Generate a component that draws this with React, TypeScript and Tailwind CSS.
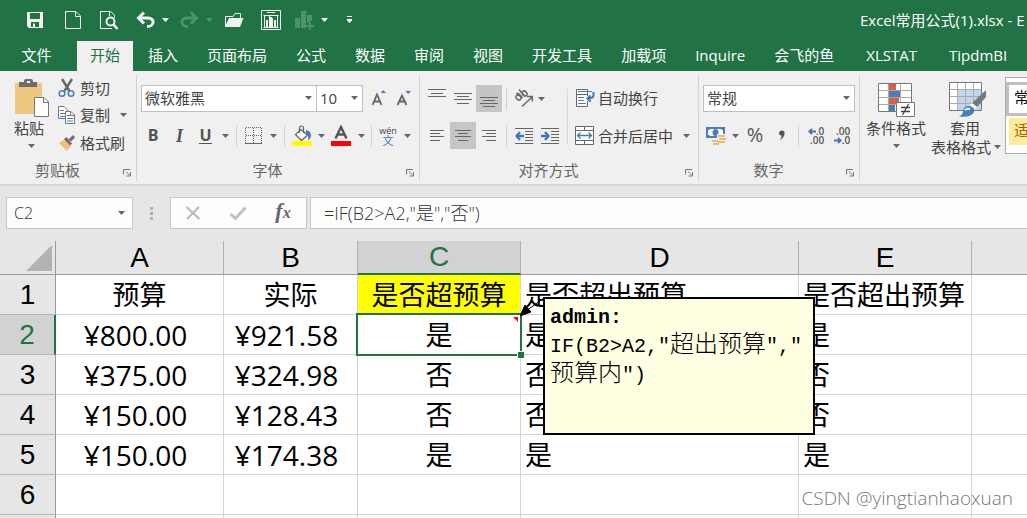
import type { ReactNode } from "react";
import clsx from "clsx";

const FONT = "font-['Open_Sans','Noto_Sans_CJK_SC',sans-serif]";

/* ---------- small shared pieces ---------- */

function Caret({ className = "text-[#666]" }: { className?: string }) {
  return (
    <svg width="7" height="4" viewBox="0 0 7 4" className={clsx("shrink-0", className)} aria-hidden="true">
      <path d="M0 0H7L3.5 4Z" fill="currentColor" />
    </svg>
  );
}

function Btn({ label, className, children, active }: { label: string; className?: string; children: ReactNode; active?: boolean }) {
  return (
    <button
      type="button"
      aria-label={label}
      aria-pressed={active}
      className={clsx("flex h-[27px] shrink-0 items-center justify-center", active && "bg-[#c5c5c5]", className)}
    >
      {children}
    </button>
  );
}

function Sep() {
  return <div className="mx-1 h-[22px] w-px shrink-0 bg-[#d0d0d0]" />;
}

function Group({ title, className, children }: { title: string; className?: string; children: ReactNode }) {
  return (
    <section aria-label={title} className={clsx("flex h-[106px] shrink-0 flex-col border-r border-[#d0d0d0]", className)}>
      <div className="min-h-0 flex-1">{children}</div>
      <div className="flex h-[18px] items-center pb-1 pr-1">
        <h2 className="flex-1 pr-2 text-center text-[15px] leading-4 text-[#666]">{title}</h2>
        <button type="button" aria-label={`${title}设置`} className="pt-1">
          <svg width="9" height="9" viewBox="0 0 9 9" fill="none" stroke="#777" aria-hidden="true">
            <path d="M.5 6.5V1.5H7M3 3.5L7 7.5M7.5 4V8H3.5" />
          </svg>
        </button>
      </div>
    </section>
  );
}

function Combo({ label, value, className }: { label: string; value: string; className: string }) {
  return (
    <div className={clsx("relative h-[27px] shrink-0", className)}>
      <select aria-label={label} defaultValue={value} className="h-full w-full appearance-none border border-[#c0c0c0] bg-white pb-0.5 pl-[3px] text-[15px] leading-5 text-[#444]">
        <option>{value}</option>
      </select>
      <Caret className="pointer-events-none absolute right-[5px] top-[11px] text-[#666]" />
    </div>
  );
}

/* ---------- title bar ---------- */

function TitleBar() {
  return (
    <header className="flex h-10 shrink-0 items-center overflow-hidden pb-px text-white">
      <div className="flex w-[860px] shrink-0 items-center pl-[26px]">
        <Btn label="保存" className="w-[18px]">
          <svg width="18" height="18" viewBox="0 0 18 18" aria-hidden="true">
            <path fill="#f2f2f2" fillRule="evenodd" d="M1 1H17V17H3L1 15ZM4 2V8H14V2ZM5 11V16H7V12.5H9V16H13V11Z" />
          </svg>
        </Btn>
        <Btn label="新建" className="ml-[19px] w-[20px]">
          <svg width="16" height="20" viewBox="0 0 16 20" fill="none" stroke="#f2f2f2" aria-hidden="true">
            <path d="M.5 1.5H11L15.5 6V18.5H.5ZM10.5 1.5V6.5H15.5" />
          </svg>
        </Btn>
        <Btn label="打印预览" className="ml-[15px] w-[22px]">
          <svg width="20" height="20" viewBox="0 0 20 20" fill="none" stroke="#f2f2f2" aria-hidden="true">
            <path d="M15.5 8V5L11.5 1.5H1.5V18.5H13M10.5 1.5V6" />
            <circle cx="11.5" cy="11.5" r="4" strokeWidth="2" fill="#217346" />
            <path d="M14.5 14.5L18.5 19" strokeWidth="2.6" />
          </svg>
        </Btn>
        <Btn label="撤消" className="ml-[16px] w-[20px]">
          <svg width="20" height="18" viewBox="0 0 20 18" fill="none" stroke="#f2f2f2" aria-hidden="true">
            <path d="M3 7H12C19 7 19 15.5 11 15.5" strokeWidth="3" />
            <path d="M8 1.5L2.5 7L8 12.5" strokeWidth="3" />
          </svg>
        </Btn>
        <Btn label="撤消列表" className="ml-[4px] w-[10px]"><Caret className="text-white" /></Btn>
        <Btn label="恢复" className="ml-[9px] w-[20px]">
          <svg width="20" height="18" viewBox="0 0 20 18" fill="none" stroke="#4f9270" aria-hidden="true">
            <path d="M17 7H8C1 7 1 15.5 9 15.5" strokeWidth="2.8" />
            <path d="M12 1.5L17.5 7L12 12.5" strokeWidth="2.8" />
          </svg>
        </Btn>
        <Btn label="恢复列表" className="ml-[5px] w-[10px]"><Caret className="text-[#4f9270]" /></Btn>
        <Btn label="打开" className="ml-[10px] w-[20px]">
          <svg width="20" height="16" viewBox="0 0 20 16" aria-hidden="true">
            <path d="M1.5 14.5V4.5H9L11 1.5H16.5V6" fill="none" stroke="#f2f2f2" />
            <path d="M5 6H19.5L16 15H1Z" fill="#f2f2f2" />
          </svg>
        </Btn>
        <Btn label="图表" className="ml-[16px] w-[22px]">
          <svg width="20" height="20" viewBox="0 0 20 20" fill="none" stroke="#f2f2f2" aria-hidden="true">
            <path d="M.5.5H19.5V19.5H.5ZM6 2.5H14M3.5 6V17M2.5 5.5H17.5M16.5 6V17M2.5 17.5H17.5M8.5 6V17M11.5 8V17" />
            <path d="M5 10H7V17H5ZM9 7H11V17H9ZM13 10H15V17H13Z" fill="#f2f2f2" stroke="none" />
          </svg>
        </Btn>
        <Btn label="插入图表" className="ml-[13px] w-[20px]">
          <svg width="20" height="20" viewBox="0 0 20 20" fill="#4f9270" aria-hidden="true">
            <path d="M0 8H5V18H0ZM6 1H11V18H6ZM12 5H17V11H14V13H12ZM14 12H16V15H19V17H16V20H14V17H11V15H14Z" />
          </svg>
        </Btn>
        <Btn label="图表选项" className="ml-[4px] w-[10px]"><Caret className="text-white" /></Btn>
        <Btn label="自定义快速访问工具栏" className="ml-[14px] w-[12px]">
          <svg width="7" height="8" viewBox="0 0 7 8" fill="#fff" aria-hidden="true">
            <path d="M1 0H6V1H1ZM1 3H6V4.500L3.500 7L1 4.500Z" />
          </svg>
        </Btn>
      </div>
      <h1 className="whitespace-nowrap text-[15px] leading-5">Excel常用公式(1).xlsx - E</h1>
    </header>
  );
}

const TABS = ["开始", "插入", "页面布局", "公式", "数据", "审阅", "视图", "开发工具", "加载项", "Inquire", "会飞的鱼", "XLSTAT", "TipdmBI"];

function Tabs() {
  return (
    <nav className="flex h-[31px] shrink-0 items-stretch overflow-hidden whitespace-nowrap pt-px text-[15px] leading-5 text-white">
      <button type="button" className="w-[77px] shrink-0 pb-[3px] pr-1">文件</button>
      <div className="flex gap-px">
        {TABS.map((t, i) => (
          <button
            key={t}
            type="button"
            className={clsx("pb-[3px]", i === 0 ? "bg-[#f0f0f0] px-[13px] text-[#217346]" : t === "XLSTAT" ? "px-[17px]" : "px-[14px]")}
          >
            {t}
          </button>
        ))}
      </div>
    </nav>
  );
}

/* ---------- ribbon groups ---------- */

function ClipboardGroup() {
  return (
    <Group title="剪贴板" className="w-[137px]">
      <div className="flex pl-[14px] pt-[2px]">
        <button type="button" className="flex w-[36px] flex-col items-start text-[15px] leading-5 text-[#444]">
          <svg width="36" height="41" viewBox="0 0 36 41" aria-hidden="true">
            <path d="M1 6H28V37H1Z" fill="#edc87e" />
            <path d="M5 5H10V4Q10 2 12 2H17Q19 2 19 4V5H23V10H5Z" fill="#6d6d6d" />
            <path d="M13 4H16V6H13Z" fill="#f0f0f0" />
            <path d="M20.500 20.500H30L34.500 25V39.500H20.500Z" fill="#fff" stroke="#777" />
            <path d="M29.500 20.500V25.500H34.500" fill="none" stroke="#777" />
          </svg>
          <span>粘贴</span>
          <span className="flex h-4 w-[34px] items-center justify-center"><Caret /></span>
        </button>
        <div className="ml-[8px] flex flex-col text-[15px] leading-5 text-[#444]">
          <button type="button" className="flex h-[22px] items-center gap-1">
            <svg width="18" height="20" viewBox="0 0 18 20" fill="none" aria-hidden="true">
              <path d="M4 1L11.500 13M14 1L6.500 13" stroke="#666" strokeWidth="2.400" />
              <circle cx="4" cy="15.500" r="2.800" stroke="#4a7ebb" strokeWidth="1.500" />
              <circle cx="13" cy="15.500" r="2.800" stroke="#4a7ebb" strokeWidth="1.500" />
            </svg>
            剪切
          </button>
          <div className="mt-[2px] flex h-[28px] items-center">
            <button type="button" className="flex items-center gap-1">
              <svg width="18" height="20" viewBox="0 0 18 20" aria-hidden="true">
                <path d="M.5 1.500H6L9.500 5V13.500H.5Z" fill="#fff" stroke="#777" />
                <path d="M2 5.500H6M2 8.500H8M2 11.500H8" stroke="#4a7ebb" />
                <path d="M7.500 6.500H13L16.500 10V18.500H7.500Z" fill="#fff" stroke="#777" />
                <path d="M12.500 6.500V10.500H16.500" fill="none" stroke="#777" />
                <path d="M9 10.500H12M9 13.500H15M9 16H15" stroke="#4a7ebb" />
              </svg>
              复制
            </button>
            <Btn label="复制选项" className="ml-[7px] w-[12px]"><Caret /></Btn>
          </div>
          <button type="button" className="flex h-[28px] items-center gap-1">
            <svg width="18" height="18" viewBox="0 0 18 18" aria-hidden="true">
              <path d="M1 9L7 5L13 12L9 17Z" fill="#edc07a" />
              <path d="M6 5L8.500 3L14 9.500L12 11.500Z" fill="#6d6d6d" />
              <path d="M10.500 5.500L15 1L17 3.500L13 7.500Z" fill="#6d6d6d" />
            </svg>
            格式刷
          </button>
        </div>
      </div>
    </Group>
  );
}

function FontGroup() {
  return (
    <Group title="字体" className="w-[283px]">
      <div className="mt-[10px] flex h-[27px] items-center pl-1">
        <Combo label="字体名称" value="微软雅黑" className="w-[176px]" />
        <Combo label="字号" value="10" className="-ml-px w-[47px]" />
        <Btn label="增大字号" className="ml-[3px] w-[26px]">
          <svg width="16" height="20" viewBox="0 0 16 20" fill="none" aria-hidden="true">
            <path d="M1.500 16L6 5.500L10.500 16M3 12.500H9" stroke="#666" strokeWidth="1.800" />
            <path d="M9.500 4L12.200 1L15 4Z" fill="#4a7ebb" />
          </svg>
        </Btn>
        <Btn label="减小字号" className="w-[23px]">
          <svg width="16" height="20" viewBox="0 0 16 20" fill="none" aria-hidden="true">
            <path d="M1.500 16L6 6.500L10.500 16M3 12.500H9" stroke="#666" strokeWidth="1.800" />
            <path d="M9.500 2H15L12.200 5Z" fill="#4a7ebb" />
          </svg>
        </Btn>
      </div>
      <div className="mt-[10px] flex h-[27px] items-center pl-[3px] text-[#555]">
        <Btn label="加粗" className="w-[26px]"><b className="pb-0.5 text-base leading-5">B</b></Btn>
        <Btn label="倾斜" className="w-[27px]"><i className="font-['Liberation_Serif',serif] text-lg font-bold leading-5">I</i></Btn>
        <Btn label="下划线" className="w-[25px]"><span className="border-b border-[#555] text-base font-bold leading-4">U</span></Btn>
        <Btn label="下划线选项" className="w-[14px]"><Caret /></Btn>
        <Sep />
        <Btn label="边框" className="w-[25px]">
          <svg width="18" height="18" viewBox="0 0 18 18" fill="none" stroke="#666" aria-hidden="true">
            <path d="M.5 1V17M8.500 1V17M16.500 1V17M1 .5H17M1 8.500H17" strokeDasharray="1 1" />
            <path d="M0 16.500H17" />
          </svg>
        </Btn>
        <Btn label="边框选项" className="w-[14px]"><Caret /></Btn>
        <Sep />
        <Btn label="填充颜色" className="w-[26px]">
          <svg width="20" height="22" viewBox="0 0 20 22" fill="none" aria-hidden="true">
            <path d="M9 4.500L15.500 10L9.500 15.500L3.500 9.500Z" fill="#fff" stroke="#666" strokeWidth="1.300" />
            <path d="M7.500 8V3Q7.500 1 9.500 1T11.500 3V8" stroke="#666" strokeWidth="1.200" />
            <path d="M14 5Q19 6 19 10Q19 14 16 15Q17 11 14 8Z" fill="#4a7ebb" />
            <path d="M0 16H20V21H0Z" fill="#ff0" />
          </svg>
        </Btn>
        <Btn label="填充颜色选项" className="w-[12px]"><Caret /></Btn>
        <Btn label="字体颜色" className="w-[28px]">
          <svg width="20" height="22" viewBox="0 0 20 22" fill="none" aria-hidden="true">
            <path d="M4.500 13.500L10 2L15.500 13.500M6.500 9.500H13.500" stroke="#555" strokeWidth="2.400" />
            <path d="M0 16H20V21H0Z" fill="red" />
          </svg>
        </Btn>
        <Btn label="字体颜色选项" className="w-[12px]"><Caret /></Btn>
        <Sep />
        <Btn label="拼音指南" className="w-[24px]">
          <span className="flex flex-col items-center">
            <span className="text-[9px] leading-[9px] text-[#444]">wén</span>
            <span className="text-[11px] leading-[11px] text-[#3f78b8]">文</span>
          </span>
        </Btn>
        <Btn label="拼音选项" className="w-[14px]"><Caret /></Btn>
      </div>
    </Group>
  );
}

function Lines({ d }: { d: string }) {
  return (
    <svg width="18" height="20" viewBox="0 0 18 20" fill="none" stroke="#666" aria-hidden="true">
      <path d={d} />
    </svg>
  );
}

function AlignGroup() {
  return (
    <Group title="对齐方式" className="w-[279px]">
      <div className="mt-[10px] flex items-center pl-1">
        <div className="flex flex-col gap-[10px]">
          <div className="flex h-[27px] items-center">
            <Btn label="顶端对齐" className="w-[26px]"><Lines d="M0 .5H18M3 4.500H15M0 7.500H18" /></Btn>
            <Btn label="垂直居中" className="w-[26px]"><Lines d="M0 4.500H18M3 7.500H15M0 10.500H18M3 14.500H15" /></Btn>
            <Btn label="底端对齐" active className="w-[26px]"><Lines d="M0 8.500H18M3 11.500H15M0 14.500H18M3 17.500H15" /></Btn>
            <Sep />
            <Btn label="方向" className="w-[26px]">
              <svg width="20" height="19" viewBox="0 0 20 19" fill="none" stroke="#666" strokeWidth="1.500" aria-hidden="true">
                <ellipse cx="4.500" cy="8.500" rx="2.200" ry="2.700" transform="rotate(-45 4.500 8.500)" />
                <path d="M2.500 5Q4 3.500 5.500 5.500L8.500 9" />
                <ellipse cx="10.500" cy="4.500" rx="2.200" ry="2.700" transform="rotate(-45 10.500 4.500)" />
                <path d="M5 .5L10.500 7" />
                <path d="M8 17.500L18 8M13 7.500H18.300V12.500" />
              </svg>
            </Btn>
            <Btn label="方向选项" className="w-[8px]"><Caret /></Btn>
          </div>
          <div className="flex h-[27px] items-center">
            <Btn label="左对齐" className="w-[26px]"><Lines d="M2 4.500H16M2 7.500H12M2 10.500H16M2 14.500H12" /></Btn>
            <Btn label="居中" active className="w-[26px]"><Lines d="M1 4.500H17M4 7.500H14M1 10.500H17M4 14.500H14" /></Btn>
            <Btn label="右对齐" className="w-[26px]"><Lines d="M2 4.500H16M6 7.500H16M2 10.500H16M6 14.500H16" /></Btn>
            <Sep />
            <Btn label="减少缩进量" className="w-[26px]">
              <svg width="18" height="18" viewBox="0 0 18 18" fill="none" aria-hidden="true">
                <path d="M0 1.500H18M10 4.500H18M10 7.500H18M10 10.500H18M10 13.500H18M0 16.500H18" stroke="#666" />
                <path d="M9 9H2M5 5L1.500 9L5 13" stroke="#3f78b8" strokeWidth="2.400" />
              </svg>
            </Btn>
            <Btn label="增加缩进量" className="w-[26px]">
              <svg width="18" height="18" viewBox="0 0 18 18" fill="none" aria-hidden="true">
                <path d="M0 1.500H18M10 4.500H18M10 7.500H18M10 10.500H18M10 13.500H18M0 16.500H18" stroke="#666" />
                <path d="M0 9H7M4 5L7.500 9L4 13" stroke="#3f78b8" strokeWidth="2.400" />
              </svg>
            </Btn>
          </div>
        </div>
        <div className="mx-1 h-[56px] w-px bg-[#d8d8d8]" />
        <div className="flex flex-col gap-[10px] pl-[3px] text-[15px] leading-5 text-[#444]">
          <button type="button" className="flex h-[27px] items-center gap-[3px] pb-px">
            <svg width="20" height="20" viewBox="0 0 20 20" fill="none" aria-hidden="true">
              <path d="M1.500 1.500H12.500V6.500H1.500ZM1.500 6.500H12.500V18.500H1.500Z" fill="#fff" stroke="#666" />
              <path d="M3 3.500H17M3 9.500H9M3 12.500H9M3 15.500H11" stroke="#4a7ebb" />
              <path d="M11 8H20V13H11Z" fill="#f0f0f0" />
              <path d="M18.500 4V7Q18.500 10.500 12.500 10.500M15.500 7.500L12.500 10.500L15.500 13.500" stroke="#3f78b8" strokeWidth="2" />
            </svg>
            自动换行
          </button>
          <div className="flex h-[27px] items-center">
            <button type="button" className="flex items-center gap-[3px]">
              <svg width="20" height="20" viewBox="0 0 20 20" fill="none" aria-hidden="true">
                <path d="M.5.5H18.500V18.500H.5ZM.5 4.500H18.500M.5 14.500H18.500M9.500 .5V4.500M9.500 14.500V18.500" fill="#fff" stroke="#666" />
                <path d="M3 9.500H16M5.500 6.500L2.500 9.500L5.500 12.500M13.500 6.500L16.500 9.500L13.500 12.500" stroke="#3f78b8" strokeWidth="1.300" />
              </svg>
              合并后居中
            </button>
            <Btn label="合并选项" className="ml-2 w-[10px]"><Caret /></Btn>
          </div>
        </div>
      </div>
    </Group>
  );
}

function NumberGroup() {
  return (
    <Group title="数字" className="w-[161px]">
      <div className="mt-[10px] pl-1"><Combo label="数字格式" value="常规" className="w-[152px]" /></div>
      <div className="mt-[10px] flex h-[27px] items-center pl-1 text-[#555]">
        <Btn label="会计数字格式" className="w-[26px]">
          <svg width="20" height="20" viewBox="0 0 20 20" aria-hidden="true">
            <path d="M0 1H19V12H0Z" fill="#4a7ebb" />
            <path d="M2 4Q4 4 4 3H15Q15 4 17 4V9Q15 9 15 10H4Q4 9 2 9Z" fill="#fff" />
            <ellipse cx="9.500" cy="6.500" rx="3" ry="3.500" fill="#4a7ebb" />
            <path d="M11 8H20V20H5V14H11Z" fill="#f0f0f0" />
            <path d="M12 9H19V11H12ZM13 12H20V14H13ZM12 15H19V17H12ZM6 14H12V16H6ZM7 17H13V19H7Z" fill="#e8bd72" />
          </svg>
        </Btn>
        <Btn label="会计格式选项" className="w-[12px]"><Caret /></Btn>
        <Btn label="百分比样式" className="w-[28px]"><span className="pb-0.5 text-xl leading-5">%</span></Btn>
        <Btn label="千位分隔样式" className="w-[25px]">
          <svg width="8" height="14" viewBox="0 0 8 14" aria-hidden="true">
            <path d="M1 4A2.800 2.800 0 1 1 6.500 5Q6 9 1.500 11Q4 8.500 3.500 6.500Q1 6.500 1 4Z" fill="#555" />
          </svg>
        </Btn>
        <Sep />
        <Btn label="增加小数位数" className="w-[26px]">
          <span className="flex flex-col items-end text-[10px] font-semibold leading-[9px]">
            <span className="flex items-center">
              <svg width="8" height="7" viewBox="0 0 8 7" fill="none" stroke="#3f78b8" strokeWidth="1.800" aria-hidden="true"><path d="M8 3.500H1.500M4 .8L1.300 3.500L4 6.200" /></svg>
              .0
            </span>
            <span>.00</span>
          </span>
        </Btn>
        <Btn label="减少小数位数" className="w-[26px]">
          <span className="flex flex-col items-end text-[10px] font-semibold leading-[9px]">
            <span>.00</span>
            <span className="flex items-center">
              <svg width="8" height="7" viewBox="0 0 8 7" fill="none" stroke="#3f78b8" strokeWidth="1.800" aria-hidden="true"><path d="M0 3.500H6.500M4 .8L6.700 3.500L4 6.200" /></svg>
              .0
            </span>
          </span>
        </Btn>
      </div>
    </Group>
  );
}

function StylesGroup() {
  return (
    <section aria-label="样式" className="flex h-[106px] min-w-0 flex-1 overflow-hidden text-[15px] leading-5 text-[#444]">
      <button type="button" className="ml-[6px] mt-[5px] flex h-[80px] w-[60px] shrink-0 flex-col items-center whitespace-nowrap">
        <svg width="38" height="38" viewBox="0 0 38 38" aria-hidden="true">
          <path d="M1.500 3.500H34.500V31.500H1.500Z" fill="#fff" />
          <path d="M12 4H19V10H12ZM12 18H22V24H12Z" fill="#d8603c" />
          <path d="M12 11H23V17H12ZM12 25H18V31H12Z" fill="#4a7ebb" />
          <path d="M1 10.500H35M1 17.500H35M1 24.500H35M11.500 4V31M23.500 4V31" stroke="#aaa" fill="none" />
          <path d="M1.500 3.500H34.500V31.500H1.500Z" fill="none" stroke="#777" />
          <path d="M19.500 22.500H37.500V36.500H19.500Z" fill="#fff" stroke="#777" />
          <path d="M24 27.500H33M24 31.500H33M31.500 24L25.500 35" stroke="#444" strokeWidth="1.300" />
        </svg>
        <span>条件格式</span>
        <span className="flex h-4 items-center"><Caret /></span>
      </button>
      <button type="button" className="ml-[5px] mt-[5px] flex h-[80px] w-[70px] shrink-0 flex-col items-start whitespace-nowrap">
        <svg width="38" height="38" viewBox="0 0 38 38" className="ml-[17px]" aria-hidden="true">
          <path d="M1.500 2.500H33.500V30.500H1.500Z" fill="#fff" />
          <path d="M9 10H33V30H9Z" fill="#c3d5ea" />
          <path d="M1 9.500H34M1 16.500H34M1 23.500H34M9.500 3V30M17.500 3V30M25.500 3V30" stroke="#aaa" fill="none" />
          <path d="M1.500 2.500H33.500V30.500H1.500Z" fill="none" stroke="#777" />
          <path d="M38 10V17L29 27L24 23Z" fill="#777" />
          <path d="M24 23L29 27L27 29L22 25Z" fill="#fff" />
          <path d="M11 36.500Q15 35 15 31Q16 26 21 26Q27 27 26 32Q23 38 11 36.500Z" fill="#4a7ebb" />
          <path d="M17 30Q19 28 22 29" stroke="#fff" fill="none" strokeWidth="2" />
        </svg>
        <span className="ml-[19px]">套用</span>
        <span className="-mt-px flex items-center gap-[3px]">表格格式 <Caret /></span>
      </button>
      <div className="ml-[4px] mt-[2px] h-[77px] flex-1 overflow-hidden border border-r-0 border-[#ababab] bg-white">
        <div className="flex flex-col whitespace-nowrap">
          <button type="button" className="mt-1 h-[34px] border-[3px] border-r-0 border-[#c0c0c0] bg-white pb-1 pl-[5px] text-left text-black">常</button>
          <button type="button" className="ml-[3px] mt-[2px] h-[27px] bg-[#ffeb9c] pb-1 pl-[5px] text-left text-[#9c6500]">适</button>
        </div>
      </div>
    </section>
  );
}

/* ---------- formula bar ---------- */

function FormulaBar() {
  return (
    <div className="flex h-[55px] shrink-0 items-start pl-[6px] pt-[11px] text-[#333]">
      <div className="flex h-8 w-[127px] shrink-0 items-center border border-[#c6c6c6] bg-[#fdfdfd] pr-[7px]">
        <input aria-label="名称框" defaultValue="C2" className="min-w-0 flex-1 pl-[7px] text-base font-light leading-5 outline-none" />
        <Caret />
      </div>
      <div className="flex h-8 w-[37px] shrink-0 flex-col items-center justify-center gap-[2px]">
        <i className="size-[3px] bg-[#b0b0b0]" />
        <i className="size-[3px] bg-[#b0b0b0]" />
        <i className="size-[3px] bg-[#b0b0b0]" />
      </div>
      <div className="flex h-8 w-[137px] shrink-0 items-center border border-[#c6c6c6] bg-[#fdfdfd]">
        <Btn label="取消" className="w-[44px]">
          <svg width="16" height="14" viewBox="0 0 16 14" fill="none" stroke="#b8b8b8" strokeWidth="2" aria-hidden="true"><path d="M1.500 1L14.500 13M14 1L2 13" /></svg>
        </Btn>
        <Btn label="输入" className="w-[46px]">
          <svg width="18" height="15" viewBox="0 0 18 15" fill="none" stroke="#c0c0c0" strokeWidth="3" aria-hidden="true"><path d="M1.500 8L6.500 12.500L16.500 1.500" /></svg>
        </Btn>
        <Btn label="插入函数" className="w-[44px]">
          <span className="pb-0.5 font-['Liberation_Serif',serif] text-[22px] font-bold italic leading-6 text-[#666]">f<span className="text-base">x</span></span>
        </Btn>
      </div>
      <input
        aria-label="编辑栏"
        defaultValue={'=IF(B2>A2,"是","否")'}
        className="ml-[3px] h-8 min-w-0 flex-1 border border-r-0 border-[#c6c6c6] bg-[#fdfdfd] pb-0.5 pl-[13px] text-lg font-light leading-6 outline-none"
      />
    </div>
  );
}

/* ---------- sheet ---------- */

const ROWS = [
  ["预算", "实际", "是否超预算", "是否超出预算", "是否超出预算"],
  ["¥800.00", "¥921.58", "是", "是", "是"],
  ["¥375.00", "¥324.98", "否", "否", "否"],
  ["¥150.00", "¥128.43", "否", "否", "否"],
  ["¥150.00", "¥174.38", "是", "是", "是"],
  ["", "", "", "", ""],
  ["", "", "", "", ""],
];

function Comment() {
  return (
    <>
      <svg width="24" height="20" viewBox="0 0 24 20" className="absolute left-[162px] top-[-18px] z-20" aria-hidden="true">
        <path d="M6 14L24 1" stroke="#000" />
        <path d="M0 19L5 8L11 15Z" fill="#000" stroke="#000" />
      </svg>
      <aside className="absolute left-[185px] top-[-18px] z-20 h-[138px] w-[272px] border-2 border-black bg-[#ffffe1] pl-[5px] pt-1 text-left font-['Liberation_Mono','Noto_Sans_CJK_SC',monospace] text-xl leading-[29px] text-black">
        <p className="font-bold">admin:</p>
        <p className="whitespace-nowrap">
          IF(B2&gt;A2,"<span className="text-2xl font-light leading-7">超出预算</span>","
        </p>
        <p className="whitespace-nowrap">
          <span className="text-2xl font-light leading-7">预算内</span>")
        </p>
      </aside>
    </>
  );
}

function Sheet() {
  return (
    <main className="relative min-h-0 flex-1 overflow-hidden bg-white">
      <table className="w-full table-fixed border-separate border-spacing-0 text-[27px] leading-9 text-black">
        <colgroup>
          <col className="w-[56px]" />
          <col className="w-[168px]" />
          <col className="w-[134px]" />
          <col className="w-[163px]" />
          <col className="w-[278px]" />
          <col className="w-[173px]" />
          <col />
        </colgroup>
        <thead>
          <tr className="h-[34px] bg-[#e6e6e6] font-['Liberation_Sans',sans-serif] text-[28px] leading-8">
            <th className="border-b border-r border-[#9b9b9b] p-0">
              <svg width="26" height="26" viewBox="0 0 26 26" className="ml-auto mr-[3px]" aria-hidden="true"><path d="M26 0V26H0Z" fill="#b2b2b2" /></svg>
            </th>
            {["A", "B", "C", "D", "E", ""].map((c) => (
              <th
                key={c}
                scope="col"
                className={clsx(
                  "p-0 font-normal",
                  c !== "" && "border-r border-r-[#b0b0b0]",
                  c === "C" ? "border-b-2 border-b-[#217346] bg-[#d2d2d2] text-[#217346]" : "border-b border-b-[#9b9b9b]",
                )}
              >
                {c}
              </th>
            ))}
          </tr>
        </thead>
        <tbody>
          {ROWS.map((row, r) => (
            <tr key={r} className="h-10">
              <th
                scope="row"
                className={clsx(
                  "border-b border-b-[#b8b8b8] p-0 font-['Liberation_Sans',sans-serif] text-[28px] font-normal leading-8",
                  r === 1 ? "border-r-2 border-r-[#217346] bg-[#d2d2d2] text-[#217346]" : "border-r border-r-[#9b9b9b] bg-[#e6e6e6]",
                )}
              >
                {r < 6 ? r + 1 : ""}
              </th>
              {row.map((v, c) => {
                const selected = r === 1 && c === 2;
                const amount = r > 0 && c < 2;
                return (
                  <td
                    key={c}
                    className={clsx(
                      "whitespace-nowrap border-b border-r border-[#d4d4d4] py-0",
                      amount ? "pl-0 pr-2 text-center text-[28px] leading-8" : c < 3 ? "px-0 text-center" : "pl-[4px] pr-0 text-left",
                      r === 0 && c === 2 && "bg-[#ff0]",
                      selected && "relative",
                    )}
                  >
                    {v}
                    {selected && (
                      <>
                        <span className="absolute -bottom-0.5 -left-0.5 -right-0.5 -top-0.5 z-10 border-2 border-[#217346]" />
                        <span className="absolute -bottom-1 -right-1 z-10 size-[7px] border border-b-0 border-r-0 border-white bg-[#217346]" />
                        <svg width="5" height="5" viewBox="0 0 5 5" className="absolute right-[2px] top-[2px]" aria-hidden="true"><path d="M0 0H5V5Z" fill="red" /></svg>
                        <Comment />
                      </>
                    )}
                  </td>
                );
              })}
              <td className="border-b border-[#d4d4d4]" />
            </tr>
          ))}
        </tbody>
      </table>
      <p className="absolute bottom-[8px] right-[14px] text-[19px] font-light leading-6 text-[#777]">CSDN @yingtianhaoxuan</p>
    </main>
  );
}

export default function App() {
  return (
    <div className={clsx("flex h-screen flex-col overflow-hidden bg-[#e6e6e6]", FONT)}>
      <div className="flex shrink-0 flex-col bg-[#217346]">
        <TitleBar />
        <Tabs />
      </div>
      <div className="flex h-[115px] shrink-0 overflow-hidden border-b-2 border-[#d5d5d5] bg-[#f0f0f0] pt-1">
        <ClipboardGroup />
        <FontGroup />
        <AlignGroup />
        <NumberGroup />
        <StylesGroup />
      </div>
      <FormulaBar />
      <Sheet />
    </div>
  );
}
